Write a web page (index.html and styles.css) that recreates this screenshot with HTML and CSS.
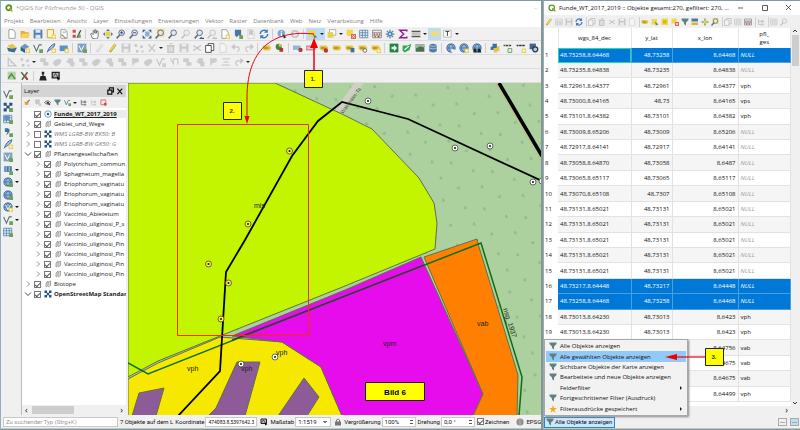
FILE: index.html
```html
<!DOCTYPE html>
<html lang="de">
<head>
<meta charset="utf-8">
<title>QGIS</title>
<link rel="stylesheet" href="styles.css">
</head>
<body>
<div class="desktop">
  <main class="window main-window">
    <header class="titlebar"><svg class="logo" viewBox="0 0 16 16"><circle cx="7.5" cy="7.5" r="5" fill="none" stroke="#589632" stroke-width="3.6"/><path d="M8 8h3l4 4v3h-3L8 11z" fill="#93b023"/><path d="M8 8h3l1 1-3 3-1-1z" fill="#ee7913"/></svg><span class="muted">*QGIS für Pilzfreunde 30 - QGIS</span><span class="minimize">–</span></header>
    <nav class="menubar">
      <a href="#">Projekt</a><a href="#">Bearbeiten</a><a href="#">Ansicht</a><a href="#">Layer</a><a href="#">Einstellungen</a><a href="#">Erweiterungen</a><a href="#">Vektor</a><a href="#">Raster</a><a href="#">Datenbank</a><a href="#">Web</a><a href="#">Netz</a><a href="#">Verarbeitung</a><a href="#">Hilfe</a>
    </nav>
    <div class="toolbar" data-icons="page folder save layout layouts style | hand move zoomin zoomout full zoomsel zoom ~zoom zoomlast ~zoomlast newmap bookmark ~book refresh | info ~gear | *select *v multi v deselect table calc cog sigma measure v *tip text v"></div>
    <div class="toolbar" data-icons="layers geopack vector feather mesh | memory | ~pencil pencil ~save ~nodes ~vertex v ~trash ~save ~cut copy ~page ~undo ~redo | label pie | abcblue abcred labelred label labelmove labelrot labeledit | plus route terrain database | globe globeadd globefind | python xml html osm"></div>
    <div class="toolbar" data-icons="~ruler ~nodes v ~shape ~blob ~shape2 ~shape ~blob ~shape2 ~shape ~flag ~blob ~vector ~split ~shape ~shape2 ~flag ~align ~redo v"></div>
    <div class="toolbar" data-icons="green tools | person snap"></div>
    <div class="workspace">
      <div class="sidebar" data-icons="vector check grid comma feather memory check2v globe2v globe2 globe3v vectorv tableadd"></div>
      <aside class="layers">
        <h2><span>Layer</span><svg class="float" viewBox="0 0 20 10"><path d="M1 4h5v5H1zM3 4V1h5v5H6M13 2l6 7M19 2l-6 7" fill="none" stroke="#111" stroke-width="1.5"/></svg></h2>
        <div class="layer-tools" data-icons="brush ~bookmark eye funnel vector v tree ~tree remove"></div>
        <ul class="tree" id="tree"></ul>
        <div class="hscroll"><span>‹</span><i></i><span>›</span></div>
      </aside>
      <svg class="map" viewBox="128 83 413 332" preserveAspectRatio="xMinYMin slice">
        <defs>
          <pattern id="wood" width="42" height="38" patternUnits="userSpaceOnUse" patternTransform="rotate(12)"><path d="M5 7h3M6 5v3M24 13h3M26 11v3M12 28h3M13 26v3M35 31h3M36 29v3" stroke="#94bd8c" stroke-width="2"/></pattern>
        </defs>
        <path fill="#acd19e" d="M128 83h413v332H128z"/>
        <path fill="url(#wood)" d="M128 83h413v332H128z"/>
        <path d="M336 116 361 80" stroke="#cdd2c4" stroke-width="8"/>
        <g stroke="#60704c" stroke-width="1">
          <path fill="#c3f400" d="M128 83H275L344 115 372 129 419 178 434 203 437 223 435 249 345 286 220 336 158 361 128 377z"/>
          <path fill="#f7e800" d="M128 379 158 363 220 337 282 342 321 367 342 416H128z"/>
          <path fill="#e60ceb" d="M232 336 345 290 421 257 483 394 473 416H342L321 367 282 342z"/>
          <path fill="#ff8000" d="M424 257 477 239 479 247 518 375 517 416H473L483 394z"/>
          <path fill="#8c5b98" d="M132 416 139 393 164 388 156 416zM208 416 216 408 237 362H260L245 416zM278 416 304 378 319 397 307 416z"/>
        </g>
        <path d="M128 363 148 374 340 298 481 243 522 377 519 416" fill="none" stroke="#087018" stroke-width="1.5"/>
        <path d="M232 340 340 298 424 265" fill="none" stroke="#40304a" stroke-width="1.2"/>
        <path d="M496 83 541 161" stroke="#c9bd70" stroke-dasharray="3 1" fill="none"/>
        <path d="M499 83 542 156" stroke="#000" stroke-width="3.5"/>
        <path d="M178 416 220 371 226 272 245 240 292 156 318 121 342 102 408 119 542 181" fill="none" stroke="#000" stroke-width="1.8"/>
        <path d="M177.500 124.500h131v211h-131z" fill="none" stroke="#f03000"/>
        <g id="finds"></g>
        <g class="map-labels">
          <text x="254" y="208">mis</text><text x="187" y="371">vph</text><text x="241" y="371">vph</text><text x="276" y="355">vph</text><text x="383" y="346">vpm</text><text x="477" y="326">vab</text>
          <text transform="translate(503 309) rotate(72)">nsg_1937</text>
          <text class="street" transform="translate(343 114) rotate(-54)">Waldmaier-Ta</text>
        </g>
        <path d="M365.500 382.500h59v18h-59z" fill="#ff0" stroke="#222"/>
        <text class="caption" x="395" y="395" text-anchor="middle">Bild 6</text>
      </svg>
    </div>
    <footer class="status">
      <input class="search" type="text" aria-label="Suche" placeholder="Zu suchender Typ (Strg+K)">
      <span class="message">7 Objekte auf dem L</span>
      <label class="coord">Koordinate <input type="text" value="474083.8,5397642.3"></label>
      <span class="glyph" data-icons="snap"></span>
      <label class="scale">Maßstab <select><option>1:1519</option></select></label>
      <span class="glyph" data-icons="lock"></span>
      <label class="spin">Vergrößerung <input type="text" value="100%"></label>
      <label class="spin">Drehung <input type="text" value="0,0 °"></label>
      <label class="draw"><input type="checkbox" checked> Zeichnen</label>
      <span class="glyph crs" data-icons="crs"></span><span class="epsg">EPSG</span>
    </footer>
  </main>

  <section class="window table-window">
    <header class="titlebar"><svg class="logo" viewBox="0 0 16 16"><circle cx="7.500" cy="7.500" r="5.500" fill="none" stroke="#589632" stroke-width="2.500"/><path d="M8 8h3l4 4v3h-3L8 11z" fill="#93b023"/></svg><span class="name">Funde_WT_2017_2019 :: Objekte gesamt:270, gefiltert: 270, ...</span>
      <svg class="window-controls" viewBox="0 0 60 10"><path d="M2 5h5M26.500 2.500h5v5h-5zM50 2l5 5M55 2l-5 5" fill="none" stroke="#333" stroke-width=".8"/></svg></header>
    <div class="toolbar small" data-icons="pencil ~calc ~save refresh | ~copy ~trash ~cut ~save ~page | label select selectall deselect funnel toplayer move2 zoomsel | ~copy ~table calc | ~tree | ~table ~zoom"></div>
    <div class="grid-area">
      <div class="grid-scroll">
        <table>
          <colgroup><col class="c-num"><col class="c-wgs"><col class="c-lat"><col class="c-lon"><col class="c-pfl"></colgroup>
          <thead><tr><th></th><th>wgs_84_dec</th><th>y_lat</th><th>x_lon</th><th>pfl_<br>ges</th></tr></thead>
          <tbody id="rows"></tbody>
        </table>
      </div>
      <div class="vscroll"><svg viewBox="0 0 8 6"><path d="M2 4l2-2 2 2" fill="none" stroke="#333"/></svg><i></i><svg class="end" viewBox="0 0 8 6"><path d="M2 2l2 2 2-2" fill="none" stroke="#333"/></svg></div>
    </div>
    <div class="table-hscroll">›</div>
    <footer class="table-status">
      <button class="filter"><span data-icons="funnel"></span>Alle Objekte anzeigen</button>
      <span class="view-switch"><button aria-label="Formular"></button><button class="on" aria-label="Tabelle"></button></span>
    </footer>
    <div class="menu">
      <button><span data-icons="funnel"></span>Alle Objekte anzeigen</button>
      <button class="active"><span data-icons="funnel"></span>Alle gewählten Objekte anzeigen</button>
      <button><span data-icons="funnel"></span>Sichtbare Objekte der Karte anzeigen</button>
      <button><span data-icons="funnel"></span>Bearbeitete und neue Objekte anzeigen</button>
      <button class="sub"><span></span>Felderfilter</button>
      <button><span data-icons="funnel"></span>Fortgeschrittener Filter (Ausdruck)</button>
      <button class="sub"><span data-icons="star"></span>Filterausdrücke gespeichert</button>
    </div>
  </section>
</div>
<svg class="annotations" viewBox="0 0 800 430" preserveAspectRatio="xMinYMin">
  <g fill="none" stroke="#e8001c">
    <path d="M314 34C278 30 247 44 247 98V117" stroke-width="1"/>
    <path d="M314 70V46" stroke-width="1.500"/>
    <path d="M705 357H676" stroke-width="1.200"/>
  </g>
  <path d="M244.500 116h5l-2.500 8zM310 48l4-10 4 10zM677 354v6l-12-3z" fill="#f00000"/>
  <g fill="#ff0" stroke="#222">
    <path d="M304.500 70.500h18v17h-18zM223.500 102.500h18v17h-18zM705.500 348.500h18v17h-18z"/>
  </g>
  <g class="steps"><text x="313" y="81">1.</text><text x="232" y="113">2.</text><text x="714" y="359">3.</text></g>
</svg>
<script src="app.js"></script>
</body>
</html>
```
FILE: styles.css
```css
* { box-sizing: border-box; }
body { margin: 0; background: #20323c; color: #111; font: 6px/8px "Open Sans", "Noto Sans", sans-serif; overflow: hidden; }
button, input, select { font: inherit; color: inherit; margin: 0; padding: 0; border: 0; background: none; }
a { color: inherit; text-decoration: none; }
svg { display: block; }

.desktop { display: grid; grid-template-columns: minmax(0, 1fr) 257px; gap: 2px; height: 100vh; padding-bottom: 1px; background: #8a9590; }
.window { display: flex; flex-direction: column; min-width: 0; min-height: 0; background: #f0f0f0; border-top: 1px solid #7d9aa5; border-left: 1px solid #8fb0c0; border-bottom: 1px solid #b5cbd4; position: relative; }
.titlebar { display: flex; align-items: center; height: 14px; flex: none; gap: 3px; padding: 0 4px; background: #fff; white-space: nowrap; }
.logo { width: 8px; height: 8px; flex: none; }
.muted { color: #999; }
.minimize { margin-left: auto; color: #bbb; }
.menubar { display: flex; align-items: center; gap: 6px; height: 12px; flex: none; padding: 0 3px; background: #fff; color: #808080; white-space: nowrap; }

.toolbar { display: flex; align-items: center; height: 14px; flex: none; padding-left: 4px; border-bottom: 1px solid #dcdcdc; overflow: hidden; }
.tool { display: grid; place-items: center; width: 13px; height: 12px; flex: none; }
.tool svg { width: 10px; height: 10px; }
.dim svg { opacity: .34; filter: grayscale(1); }
.on { background: #bcdcf4; }
.sep { width: 5px; height: 10px; flex: none; background: linear-gradient(90deg, transparent 2px, #cfcfcf 2px, #cfcfcf 3px, transparent 3px); }
.drop { width: 6px; height: 12px; flex: none; display: grid; place-items: center; }
.drop::after { content: ""; border: 2px solid transparent; border-top-color: #222; border-bottom: 0; }

.workspace { display: grid; grid-template-columns: 20px 107px minmax(0, 1fr); flex: 1; min-height: 0; }
.sidebar { display: grid; grid-template-rows: repeat(12, 1fr); align-content: start; height: 35vh; margin-top: 5px; }
.sidebar .tool { height: auto; }
.sidebar .has-menu { width: 20px; grid-template-columns: 13px 6px; }
.sidebar .has-menu::after { content: ""; border: 2px solid transparent; border-top-color: #111; border-bottom: 0; }
.map { width: 100%; height: 100%; min-height: 0; }
.map-labels { font: 7px "Liberation Sans", sans-serif; fill: #222; }
.map-labels .street { font-size: 5px; fill: #444; }
.caption { font: bold 8px "Liberation Sans", sans-serif; }

.layers { display: flex; flex-direction: column; min-height: 0; min-width: 0; background: #fff; border-left: 1px solid #bbb; border-right: 2px solid #eee; }
.layers h2 { display: flex; justify-content: space-between; align-items: center; height: 14px; flex: none; margin: 0; padding: 0 2px; background: #d4d4d4; font-size: 6px; font-weight: 400; border-top: 2px solid #f0f0f0; }
.float { width: 18px; height: 8px; }
.layer-tools { display: flex; align-items: center; height: 11px; flex: none; background: #f0f0f0; }
.layer-tools .tool { width: 10px; }
.layer-tools .tool svg { width: 7px; height: 7px; }
.tree { list-style: none; margin: 0; padding: 1px 0 0; flex: 1; overflow: hidden; }
.tree label { display: grid; grid-template-columns: 8px 8px 8px minmax(0, 1fr); gap: 2px; align-items: center; height: 10px; padding-left: 2px; white-space: nowrap; }
.tree .child label { padding-left: 12px; }
.tree .name { color: #222; }
.tree .chosen .name { font-weight: 700; text-decoration: underline; background: #ececec; }
.tree .bold .name { font-weight: 700; }
.tree .wms .name { font-style: italic; color: #777; }
.tree svg { width: 8px; height: 8px; }
input[type="checkbox"] { appearance: none; width: 7px; height: 7px; border: 1px solid #777; background: #fff; display: grid; place-items: center; }
input[type="checkbox"]:checked::after { content: ""; width: 4px; height: 2px; border: solid #555; border-width: 0 0 1px 1px; transform: rotate(-45deg); }
.hscroll { display: flex; align-items: center; gap: 4px; height: 10px; flex: none; padding: 0 3px; background: #f0f0f0; font-size: 9px; }
.hscroll i { width: 42px; height: 8px; background: #cdcdcd; }
.hscroll span:last-child { margin-left: auto; }

.status { display: flex; align-items: center; gap: 2px; height: 13px; flex: none; padding-left: 2px; white-space: nowrap; overflow: hidden; font-family: Roboto, sans-serif; }
.status label { display: flex; align-items: center; gap: 1px; flex: none; }
.status input[type="text"], .status select { height: 10px; padding: 0 2px; border: 1px solid #c8c8c8; background: #fff; }
.status .search { width: 115px; flex: none; padding-left: 10px; background: radial-gradient(circle at 5px 4px, transparent 1px, #888 2px, transparent 3px) #fff; }
.search::placeholder { color: #999; }
.message { flex: none; }
.status .coord input { width: 52px; font-size: 5px; }
.status .scale select { width: 36px; appearance: none; background: conic-gradient(from -45deg at 50% 100%, #777 90deg, transparent 0) right 3px center / 4px 2px no-repeat, #fff; }
.status .spin input { width: 34px; background: linear-gradient(#555, #555) right 2px top 2px / 3px 1px no-repeat, linear-gradient(#555, #555) right 2px bottom 2px / 3px 1px no-repeat, #fff; }
.glyph, .glyph .tool { width: 9px; flex: none; }
.glyph svg { width: 8px; height: 8px; }
.crs { margin-left: 4px; }
.epsg { flex: none; }

.table-window .name { flex: 1; }
.window-controls { width: 60px; height: 10px; flex: none; }
.small { height: 13px; padding-left: 0; border: 0; }
.small .tool { width: 10px; height: 10px; }
.small .tool svg { width: 8px; height: 8px; }
.small .sep { width: 3px; }
.grid-area { display: grid; grid-template-columns: minmax(0, 1fr) 9px; flex: 1; min-height: 0; background: #fff; }
.grid-scroll { min-height: 0; padding-bottom: 4px; }
table { width: 100%; height: 100%; table-layout: fixed; border-collapse: collapse; }
.c-num { width: 14px; } .c-wgs { width: 73px; } .c-lat { width: 41px; } .c-lon { width: 66px; }
th, td { padding: 0 2px; overflow: hidden; white-space: nowrap; }
thead th { height: 20px; font-weight: 400; border-right: 1px solid #e5e5e5; }
tbody th { font-weight: 400; text-align: left; padding: 0 1px; }
td { border: solid #e2e2e2; border-width: 0 1px 1px 0; text-align: right; }
td:nth-child(2), td:last-child { text-align: left; }
tbody tr:nth-child(even) td { background: #f5f5f5; }
tbody tr.selected td { background: #0078d7; color: #fff; border-color: #4ba0e2; }
tbody tr.current td:nth-child(2) { outline: 1px solid #26d9a8; outline-offset: -1px; }
.null { font-style: italic; color: #999; }
.vscroll { display: flex; flex-direction: column; background: #f0f0f0; }
.vscroll i { height: 31px; margin: 1px; background: #cdcdcd; }
.vscroll svg { width: 8px; height: 6px; }
.vscroll .end { margin-top: auto; }
.table-hscroll { height: 10px; flex: none; padding-right: 12px; text-align: right; font-size: 9px; }
.table-status { display: flex; justify-content: space-between; align-items: center; height: 12px; flex: none; }
.filter { display: flex; align-items: center; height: 11px; padding-right: 2px; background: #cce8ff; border: 1px solid #2a84c8; white-space: nowrap; font-family: Roboto, sans-serif; }
.filter .tool { width: 10px; height: 8px; }
.filter svg, .menu svg { width: 8px; height: 8px; }
.view-switch { display: flex; gap: 3px; padding-right: 1px; }
.view-switch button { width: 9px; height: 8px; border: 1px solid #aaa; background-image: linear-gradient(#aaa, #aaa); background-size: 5px 1px; background-repeat: no-repeat; background-position: center; }
.menu { position: absolute; left: 0; bottom: 12px; display: grid; grid-auto-rows: 1fr; width: 144px; height: 77px; padding: 1px; background: #f2f2f2; border: 1px solid #a8a8a8; box-shadow: 1px 1px 2px #888; }
.menu button { display: grid; grid-template-columns: 14px 1fr; align-items: center; text-align: left; white-space: nowrap; }
.menu .tool { height: 8px; }
.menu .active { background: #91c9f7; }
.menu .sub { grid-template-columns: 14px 1fr 6px; }
.menu .sub::after { content: ""; width: 2px; border: 2px solid transparent; border-left-color: #222; border-right: 0; }
.annotations { position: absolute; left: 0; top: 0; width: 800px; height: 430px; pointer-events: none; }
.steps { font: bold 6px "Liberation Sans", sans-serif; text-anchor: middle; fill: #333; }
```
FILE: app.js
```javascript
// Icons on a 16 x 16 grid
const s = (d, color, width = 1.6, fill = 'none') => `<path d="${d}" fill="${fill}" stroke="${color}" stroke-width="${width}"/>`;
const f = (d, color) => `<path d="${d}" fill="${color}"/>`;
const badge = f('M9 9h7v7H9z', '#e8cf45') + s('M12.500 10v5M10 12.500h5', '#fff', 1.4);
const greenBadge = f('M10 10h6v6h-6z', '#6ba355');
const sheet = s('M3 1h7l3 4v10H3z', '#888', 1.2, '#fff');
const lens = '<circle cx="9" cy="6" r="4.500" fill="#dce9f4" stroke="#667" stroke-width="1.500"/>' + s('M6 9.500 1 15', '#667', 2.4);
const tag = f('M1 4h11l3 4-3 4H4L1 9z', '#e5c440') + s('M3 8h7', '#7a6a20', 1.5);
const ball = '<circle cx="8" cy="8" r="6.500" fill="#8fb5d8" stroke="#34618f" stroke-width="1.400"/>' + s('M1.500 8h13M8 1.500C3 6 3 10 8 14.500M8 1.500c5 4.500 5 8.500 0 13', '#34618f', 1);
const chess = f('M1 1h5v5H1zM10 1h5v5h-5zM5.500 5.500h5v5h-5zM1 10h5v5H1zM10 10h5v5h-5z', '#244f82');
const vee = s('M1 3l4.500 10L10 3h4', '#5b6d7d', 1.8);
const gridIcon = s('M1 2h13v12H1zM1 6h13M1 10h13M5.500 2v12M10 2v12', '#4c7baa', 1.2, '#e9f1f8');
const snapped = s('M2 2h11v9H2z', '#222', 2, '#bbb') + s('M4 9l3-5 4 5', '#222', 1.3) + f('M9 8l6 5-3 .5-1 2.500z', '#000');
const icons = {
  page: sheet, folder: f('M1 3h6l1 2h6v9H1z', '#e2ac28') + f('M3 7h13l-2 7H1z', '#f8d45b'),
  save: f('M1 1h14v14H1z', '#5480ab') + f('M4 1h8v5H4zM4 9h8v6H4z', '#dbe7f2'),
  layout: s('M2 1h10v13H2z', '#b6a33d', 1.4, '#fff6be') + badge,
  layouts: sheet + s('M4 9l7 6', '#80964d', 2) + s('M6 5h5', '#999'),
  style: f('M1 1h5v5H1zM1 9h5v5H1z', '#c45050') + s('M8 14l6-12', '#444', 2) + f('M9 9h5v5H9z', '#68a058'),
  hand: s('M4 15 1 8l2-1 2 2V3l2-1 1 5V1l2 1v5l1-4 2 1v8l-2 4z', '#555', 1.2, '#fff'),
  move: f('M8 0l3 3H5zM8 16l3-3H5zM0 8l3-3v6zM16 8l-3-3v6z', '#416ea0') + f('M4 4h8v8H4z', '#e6d24e'),
  move2: s('M8 1v14M1 8h14', '#5d6b24', 2) + f('M5 5h6v6H5z', '#e8d34a'),
  zoomin: lens + s('M9 3.500v5M6.500 6h5', '#2861a0'), zoomout: lens + s('M6.500 6h5', '#2861a0'), zoom: lens,
  full: f('M1 1h5L1 6zM15 1v5l-5-5zM1 15v-5l5 5zM15 15h-5l5-5z', '#2f5d90') + f('M5 4h7v8H5z', '#8db1d4'),
  zoomsel: f('M3 0h12v12H3z', '#f1df59') + lens, zoomlast: lens + f('M8 16l4-4v2h4v2z', '#245a91'),
  newmap: sheet + badge, bookmark: f('M3 1h10v11l-4-2-3 3-3-3z', '#4877a8') + greenBadge, book: sheet + f('M5 2h6v9L8 8l-3 3z', '#777'),
  refresh: s('M2 8a6 6 0 0 1 10-4.500M14 8a6 6 0 0 1-10 4.500', '#3b79bb', 2.4) + f('M14 0v6H8zM2 16v-6h6z', '#3b79bb'),
  info: '<circle cx="7" cy="7" r="6" fill="#7da9d2"/>' + s('M7 6v5M7 3v1.500', '#fff', 2) + f('M9 8l6 5-4 2z', '#333'),
  gear: '<circle cx="8" cy="8" r="5" fill="none" stroke="#777" stroke-width="3"/>',
  cog: s('M8 1v14M1 8h14M3 3l10 10M13 3L3 13', '#5486b5', 2) + '<circle cx="8" cy="8" r="4" fill="#5486b5"/><circle cx="8" cy="8" r="1.500" fill="#fff"/>',
  select: f('M1 2h11v11H1z', '#edd94b') + f('M8 7l7 6-4 1-1 2z', '#777'),
  selectall: f('M1 1h13v13H1z', '#efd944') + f('M4 4h7v7H4z', '#d3b920'),
  multi: s('M4 1h10v9H4z', '#999', 1.2, '#fff') + f('M1 5h9v9H1z', '#e6d14c'),
  deselect: f('M1 1h10v10H1z', '#efd944') + f('M8 8h8v8H8z', '#d96b55') + s('M10 10l4 4M14 10l-4 4', '#fff', 1.2),
  table: gridIcon, tableadd: f('M1 2h13v12H1z', '#98b8d6') + gridIcon + greenBadge,
  calc: s('M1 2h14v12H1zM1 6h14M1 10h14', '#777', 1.2, '#eee') + s('M3 8h2M7 8h2M11 8h2M4 12h2M9 12h3', '#a33', 2),
  sigma: s('M14 4V2H3l6 6-6 6h11v-2', '#8c218c', 2.4), measure: s('M1 4h14M1 12h14', '#555', 2.4) + s('M1 8h14', '#aaa', 2),
  tip: f('M1 3h14v8H8l-4 4v-4H1z', '#e9df82'), text: s('M1 2h12v11H1z', '#999', 1, '#fff') + s('M4 4h6M7 4v7', '#444'),
  layers: f('M1 4l8-3 6 6-8 4z', '#e5c841') + f('M0 7l8 2 8-2-4 8-10-2z', '#3c6b9d'),
  geopack: f('M1 6l7-5 7 5-7 4z', '#6c98c0') + f('M1 6l7 4v6l-7-4z', '#31608f') + badge,
  vector: vee + greenBadge, feather: s('M2 15C4 8 8 3 14 1c0 6-6 9-11 12', '#406f9d', 1.6, '#a4c2dc') + badge,
  mesh: f('M1 4h13v9H1z', '#5d90c5') + badge, memory: f('M1 1h14v14H1z', '#7da1c2') + s('M3 4l4 8 4-8', '#fff', 1.6) + greenBadge,
  pencil: s('M3 14L12 2', '#a98f24', 4) + s('M3 13L12 2', '#f7dc55', 2.4), nodes: f('M1 2h4v4H1zM10 4h4v4h-4zM3 11h4v4H3zM12 12h3v3h-3z', '#777'),
  vertex: s('M2 2l11 12M13 2L3 14', '#777', 2), trash: s('M3 5h9v10H3zM1 4h13M6 1h4', '#777', 2, '#bbb'),
  cut: s('M2 4l12 8M2 12l12-8', '#666', 2), copy: s('M5 1h9v11H5z', '#444', 1.4, '#fff') + s('M1 4h9v11H1z', '#444', 1.4, '#fff'),
  undo: s('M3 6h8q5 4-1 8', '#777', 2) + f('M6 1v10L0 6z', '#777'), redo: s('M13 6H5q-5 4 1 8', '#777', 2) + f('M10 1v10l6-5z', '#777'),
  label: tag, labelred: tag + '<circle cx="11" cy="12" r="3.500" fill="#bc3434"/>', labelmove: tag + f('M9 8h6v7H9z', '#456e9c'),
  labelrot: tag + '<circle cx="11" cy="12" r="3" fill="#fff" stroke="#333"/>', labeledit: tag + badge,
  abcblue: f('M0 4h12v7H0z', '#8fb6d8') + '<circle cx="12" cy="11" r="3.500" fill="#b33b3b"/>', abcred: f('M0 4h14l2 4-2 4H0z', '#dc8989') + s('M2 8h9', '#fff'),
  pie: '<circle cx="6" cy="6" r="5" fill="#348c42"/>' + f('M6 6V1a5 5 0 0 1 5 5z', '#e0c133') + f('M7 8h6v6H7z', '#bc312f'),
  plus: f('M1 1h14v14H1z', '#198642') + f('M4 6h4V3l5 5-5 5v-3H4z', '#fff'), route: f('M1 4l8 0 6-3-3 10-8 4-3-3z', '#36a852') + s('M4 11l7-6', '#fff', 2),
  terrain: f('M1 2h14v12H1z', '#49734c') + f('M1 2h14v5L8 5l-7 4z', '#a5b9a7'), database: f('M2 3q6-4 12 0v10q-6 4-12 0z', '#507da8') + s('M2 4q6 3 12 0M2 8q6 3 12 0', '#b3cce0', 1.3),
  globe: ball + f('M9 9l6 2-2 5-5-2z', '#edf2f6'), globeadd: ball + badge, globefind: ball + f('M3 9h4v6H2zM9 9h4l2 6H9z', '#222'), globe2: ball + greenBadge, globe3: ball + s('M4 5l4 7 4-7', '#fff', 1.4) + badge,
  python: f('M4 1h7v7H6v3H1V6h3z', '#3b71a1') + f('M6 8h5V5h4v8h-4v2H6z', '#e5c345'),
  xml: s('M1 4h2M4 4h4M9 4h4', '#444', 2.5) + s('M8 9h6v6H8z', '#6f9c68', 1.5), html: s('M1 4h3M5 4h4M10 4h4', '#333', 2.5) + badge, osm: f('M1 1h10v9H1z', '#42678d') + '<circle cx="10" cy="10" r="4" fill="#b5cbe0" stroke="#23364a" stroke-width="2"/>',
  ruler: s('M2 2v12h12zM6 9h4', '#777', 2), shape: f('M2 2h9v6h4v6H7V8H2z', '#888'), shape2: f('M2 8l4-6h7v6h2v7H9l-1-4z', '#888'), blob: f('M2 11C0 6 10 1 14 4s-4 11-8 11z', '#888'),
  flag: f('M3 2h11v6l-7 2-3 5z', '#888'), split: s('M2 2l5 9V3h7v9', '#888', 2), align: s('M2 3h12M4 8h8M1 13h13', '#888', 2),
  green: f('M1 1h13v13H1z', '#b4d4aa') + s('M2 12l5-7 6 8', '#57904b', 2.5), tools: s('M2 2l10 12M12 2L3 14', '#596c43', 2.5) + s('M9 9l3 5', '#c3382d', 3),
  person: f('M6 1h4v4H6zM4 8h8l2 7H2z', '#222') + s('M8 4v5', '#222', 2), snap: snapped,
  check: chess + greenBadge, check2: f('M2 2h12v9H2z', '#4678a8') + s('M5 3v7M10 3v7', '#b9d0e4') + greenBadge, grid: gridIcon + f('M2 3h8v7H2z', '#5f90be') + greenBadge,
  comma: f('M3 2h5q4 2 2 6t-6 5q3-3 3-5H3z', '#3f6f9f') + greenBadge, raster: chess,
  brush: s('M3 12L13 2', '#8c6238', 2.5) + f('M1 6h9v7H3z', '#e09b46'), eye: s('M1 8q7-8 14 0-7 8-14 0z', '#444', 1.5) + f('M6 6h5v5H6zM9 11h6l-3 4z', '#333'),
  funnel: f('M1 1h14v3l-5 5v6l-4-3V9L1 4z', '#5f8181'), tree: s('M3 2v11h5M3 7h5', '#777', 2) + f('M8 4h6v5H8zM8 11h6v4H8z', '#888'), remove: s('M2 2h11v11H2z', '#cf6060', 1.8, '#f4e5e5') + f('M9 9h6v6H9z', '#d34b4b'),
  toplayer: f('M1 1h13v6H1z', '#4f789f') + f('M1 9h13v5H1z', '#d4b83c'), star: f('M8 0l2 6h6l-5 4 2 6-5-4-5 4 2-6-5-4h6z', '#f5a91d'),
  lock: f('M2 7h12v8H2z', '#777') + s('M5 8V4q3-4 6 0v4', '#777', 2), crs: '<circle cx="8" cy="8" r="7" fill="#777"/>' + s('M1 8h14M3 4h10M3 12h10M8 1v14', '#ddd', 1),
  group: s('M4 14V6l4-4v9zM8 5l5-3v9l-5 3', '#888', 1.4, '#ddd'), point: '<circle cx="8" cy="8" r="6.500" fill="#fff" stroke="#3c7ab4" stroke-width="1.500"/><circle cx="8" cy="8" r="2.500" fill="#235b92"/>'
};
const draw = name => `<svg viewBox="0 0 16 16">${icons[name] || ''}</svg>`;

document.querySelectorAll('[data-icons]').forEach(bar => {
  const plain = bar.matches('button span, .glyph');
  bar.innerHTML = bar.dataset.icons.split(' ').map(token => {
    if (token === '|') return '<span class="sep"></span>';
    if (token === 'v') return '<span class="drop"></span>';
    if (token === '*v') return '<span class="drop on"></span>';
    let name = token.replace(/^[~*]/, ''), cls = 'tool';
    if (token[0] === '~') cls += ' dim';
    if (token[0] === '*') cls += ' on';
    if (!icons[name] && name.endsWith('v')) { name = name.slice(0, -1); cls += ' has-menu'; }
    return plain ? `<span class="${cls}">${draw(name)}</span>` : `<button class="${cls}" aria-label="${name}">${draw(name)}</button>`;
  }).join('');
});

// Layer tree: class, icon, name, arrow, checked
const layers = [
  ['chosen', 'point', 'Funde_WT_2017_2019', '', 1], ['', 'group', 'Gebiet_und_Wege', '>', 1],
  ['wms', 'raster', 'WMS LGRB-BW BK50: B', '>', 0], ['wms', 'raster', 'WMS LGRB-BW GK50: G', '>', 0],
  ['', 'group', 'Pflanzengesellschaften', 'v', 1],
  ...['Polytrichum_commun', 'Sphagnetum_magella', 'Eriophorum_vaginatu', 'Eriophorum_vaginatu', 'Eriophorum_vaginatu', 'Vaccinio_Abietetum', 'Vaccinio_uliginosi_P_s', 'Vaccinio_uliginosi_Pin', 'Vaccinio_uliginosi_Pin', 'Vaccinio_uliginosi_Pin', 'Vaccinio_uliginosi_Pin', 'Vaccinio_uliginosi_Pin'].map(n => ['child', 'group', n, '>', 1]),
  ['', 'group', 'Biotope', '>', 1], ['bold', 'raster', 'OpenStreetMap Standar', 'v', 1]
];
const arrows = { '': '', '>': s('M6 3l5 5-5 5', '#777', 1.6), 'v': s('M2 5l6 6 6-6', '#333', 1.8) };
document.getElementById('tree').innerHTML = layers.map(([cls, icon, name, arrow, on]) =>
  `<li class="${cls}"><label><svg viewBox="0 0 16 16">${arrows[arrow]}</svg><input type="checkbox"${on ? ' checked' : ''}>${draw(icon)}<span class="name">${name}</span></label></li>`).join('');

// Attribute table
const records = `48.73258,8.64468 48,73258 8,64468 NULL
48.73235,8.64838 48,73235 8,64838 NULL
48.72961,8.64377 48,72961 8,64377 vph
48.73000,8.64165 48,73 8,64165 vps
48.73101,8.64382 48,73101 8,64382 vph
48.73009,8.65206 48,73009 8,65206 NULL
48.72917,8.64141 48,72917 8,64141 NULL
48.73058,8.64870 48,73058 8,6487 NULL
48.73065,8.65117 48,73065 8,65117 NULL
48.73070,8.65108 48,7307 8,65108 NULL
48.73131,8.65021 48,73131 8,65021 NULL
48.73131,8.65021 48,73131 8,65021 NULL
48.73131,8.65021 48,73131 8,65021 NULL
48.73131,8.65021 48,73131 8,65021 NULL
48.73131,8.65021 48,73131 8,65021 NULL
48.73217,8.64448 48,73217 8,64448 NULL
48.73258,8.64468 48,73258 8,64468 NULL
48.73013,8.64230 48,73013 8,6423 vph
48.73013,8.64230 48,73013 8,6423 vph
- - 8,64756 vab
- - 8,64675 vab
- - 8,64675 vab
- - 8,64499 vph`.split('\n').map(line => line.split(' '));
document.getElementById('rows').innerHTML = records.map((r, i) => {
  const cls = [0, 15, 16].includes(i) ? 'selected' : '';
  const cells = r.map(v => v === 'NULL' ? '<td class="null">NULL</td>' : `<td>${v === '-' ? '' : v}</td>`).join('');
  return `<tr class="${cls}${i ? '' : ' current'}"><th>${i < 19 ? i + 1 : ''}</th>${cells}</tr>`;
}).join('');

// Find spots on the map
const spots = [[289.5, 151, 1], [248, 224, 1], [208.5, 264, 1], [228.5, 283, 1], [221, 319, 1], [241, 364], [275, 357], [368, 101], [455, 148], [490, 146], [533, 182], [542, 181]];
document.getElementById('finds').innerHTML = spots.map(([x, y, hit]) =>
  `<circle cx="${x}" cy="${y}" r="3" fill="${hit ? '#fff23c' : '#fff'}" stroke="#444" stroke-width=".8"/><circle cx="${x}" cy="${y}" r="1" fill="#111"/>`).join('');
```
